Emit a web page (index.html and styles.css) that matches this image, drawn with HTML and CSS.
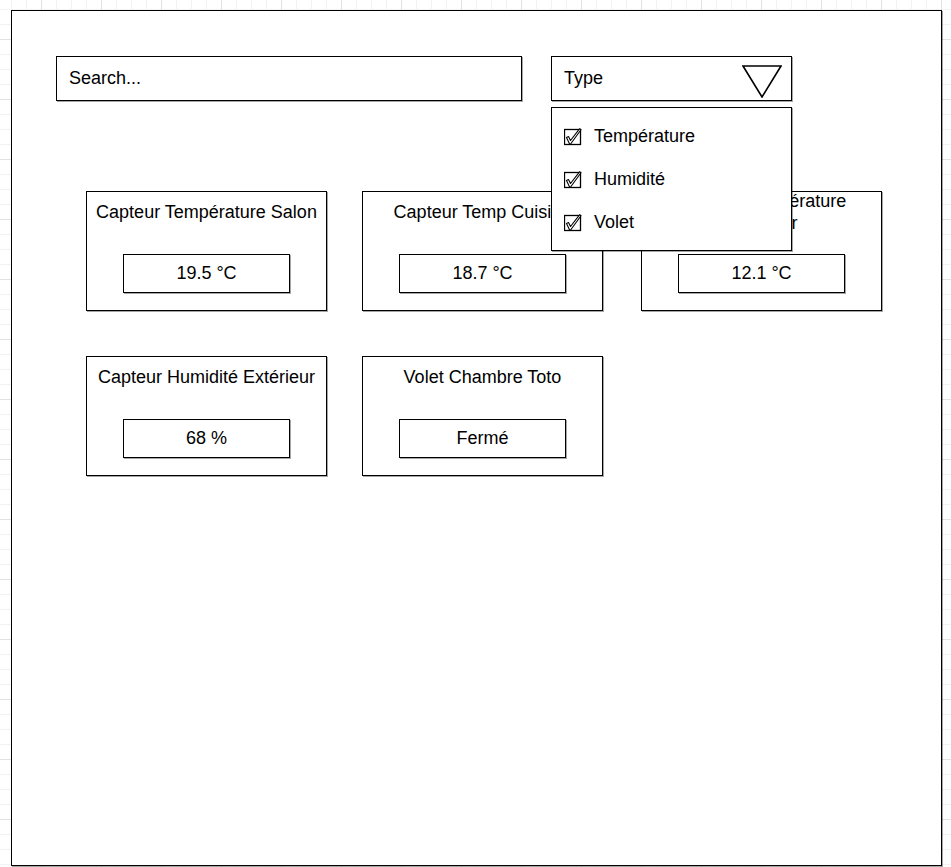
FILE: index.html
```html
<!DOCTYPE html>
<html lang="fr">
<head>
<meta charset="utf-8">
<title>Capteurs</title>
<link rel="stylesheet" href="styles.css">
</head>
<body>
<div class="board">
  <div class="toolbar">
    <div class="search">Search...</div>
    <div class="type-select">
      <span>Type</span>
      <svg class="caret" width="40" height="33" viewBox="0 0 40 33"><polygon points="1,1 39,1 20,32" fill="none" stroke="#000" stroke-width="1.6"/></svg>
      <div class="menu">
        <div class="menu-item"><svg class="check" width="18" height="18" viewBox="0 0 18 18"><rect x="0.5" y="1.5" width="16" height="15" fill="none" stroke="#000" stroke-width="1.3"/><path d="M2.5 9.5 L4.5 8.5 L6.5 12.5 L15.5 0.8 L17 1.8 L6.6 16 L5.6 16 Z" fill="#fff" stroke="#000" stroke-width="1.1" stroke-linejoin="round"/></svg><span>Température</span></div>
        <div class="menu-item"><svg class="check" width="18" height="18" viewBox="0 0 18 18"><rect x="0.5" y="1.5" width="16" height="15" fill="none" stroke="#000" stroke-width="1.3"/><path d="M2.5 9.5 L4.5 8.5 L6.5 12.5 L15.5 0.8 L17 1.8 L6.6 16 L5.6 16 Z" fill="#fff" stroke="#000" stroke-width="1.1" stroke-linejoin="round"/></svg><span>Humidité</span></div>
        <div class="menu-item"><svg class="check" width="18" height="18" viewBox="0 0 18 18"><rect x="0.5" y="1.5" width="16" height="15" fill="none" stroke="#000" stroke-width="1.3"/><path d="M2.5 9.5 L4.5 8.5 L6.5 12.5 L15.5 0.8 L17 1.8 L6.6 16 L5.6 16 Z" fill="#fff" stroke="#000" stroke-width="1.1" stroke-linejoin="round"/></svg><span>Volet</span></div>
      </div>
    </div>
  </div>
  <div class="cards">
    <div class="card"><div class="card-title">Capteur Température Salon</div><div class="card-value">19.5 °C</div></div>
    <div class="card"><div class="card-title">Capteur Temp Cuisine</div><div class="card-value">18.7 °C</div></div>
    <div class="card"><div class="card-title">Capteur Température Extérieur</div><div class="card-value">12.1 °C</div></div>
    <div class="card"><div class="card-title">Capteur Humidité Extérieur</div><div class="card-value">68 %</div></div>
    <div class="card"><div class="card-title">Volet Chambre Toto</div><div class="card-value">Fermé</div></div>
  </div>
</div>
</body>
</html>
```
FILE: styles.css
```css
html {
  background-color: #fff;
  background-image:
    linear-gradient(to right, #e2e2e2 1px, transparent 1px),
    linear-gradient(to bottom, #e2e2e2 1px, transparent 1px),
    linear-gradient(to right, #f2f2f2 1px, transparent 1px),
    linear-gradient(to bottom, #f2f2f2 1px, transparent 1px);
  background-size: 60px 60px, 60px 60px, 15px 15px, 15px 15px;
  background-position: 41px 39px, 41px 39px, 11px 9px, 11px 9px;
}

body {
  margin: 0;
  padding: 10px 0 0 11px;
  width: 951px;
  height: 867px;
  box-sizing: border-box;
  overflow: hidden;
  font-family: "Liberation Sans", Arial, sans-serif;
  font-size: 18px;
  color: #000;
}

.board {
  box-sizing: border-box;
  width: 931px;
  height: 856px;
  border: 1px solid #000;
  box-shadow: 1px 1px 0 rgba(0, 0, 0, 0.35);
  background: #fff;
  padding: 45px 0 0 44px;
}

.toolbar {
  display: flex;
  gap: 29px;
}

.search {
  box-sizing: border-box;
  width: 466px;
  height: 45px;
  border: 1px solid #000;
  box-shadow: 1px 1px 0 rgba(0, 0, 0, 0.35);
  padding-left: 12px;
  display: flex;
  align-items: center;
}

.type-select {
  position: relative;
  box-sizing: border-box;
  width: 241px;
  height: 45px;
  border: 1px solid #000;
  box-shadow: 1px 1px 0 rgba(0, 0, 0, 0.35);
  padding: 0 9px 0 12px;
  display: flex;
  justify-content: space-between;
  align-items: center;
}

.caret {
  align-self: flex-start;
  margin-top: 8px;
  display: block;
}

.menu {
  position: absolute;
  top: calc(100% + 7px);
  left: -1px;
  z-index: 2;
  box-sizing: border-box;
  width: 241px;
  height: 144px;
  border: 1px solid #000;
  box-shadow: 1px 1px 0 rgba(0, 0, 0, 0.35);
  background: #fff;
  padding: 7px 0 0 12px;
}

.menu-item {
  height: 43px;
  display: flex;
  align-items: center;
  gap: 12px;
}

.check {
  display: block;
}

.cards {
  display: grid;
  grid-template-columns: 276px 279px 241px;
  row-gap: 45px;
  margin-top: 90px;
  padding-left: 30px;
}

.card {
  box-sizing: border-box;
  width: 241px;
  height: 120px;
  border: 1px solid #000;
  box-shadow: 1px 1px 0 rgba(0, 0, 0, 0.35);
  display: flex;
  flex-direction: column;
  align-items: center;
}

.card-title {
  box-sizing: border-box;
  width: 100%;
  height: 40px;
  padding: 0 4px;
  display: flex;
  align-items: center;
  justify-content: center;
  text-align: center;
  line-height: 22px;
}

.card-value {
  box-sizing: border-box;
  width: 167px;
  height: 39px;
  margin-top: 22px;
  border: 1px solid #000;
  box-shadow: 1px 1px 0 rgba(0, 0, 0, 0.35);
  display: flex;
  align-items: center;
  justify-content: center;
}
```
